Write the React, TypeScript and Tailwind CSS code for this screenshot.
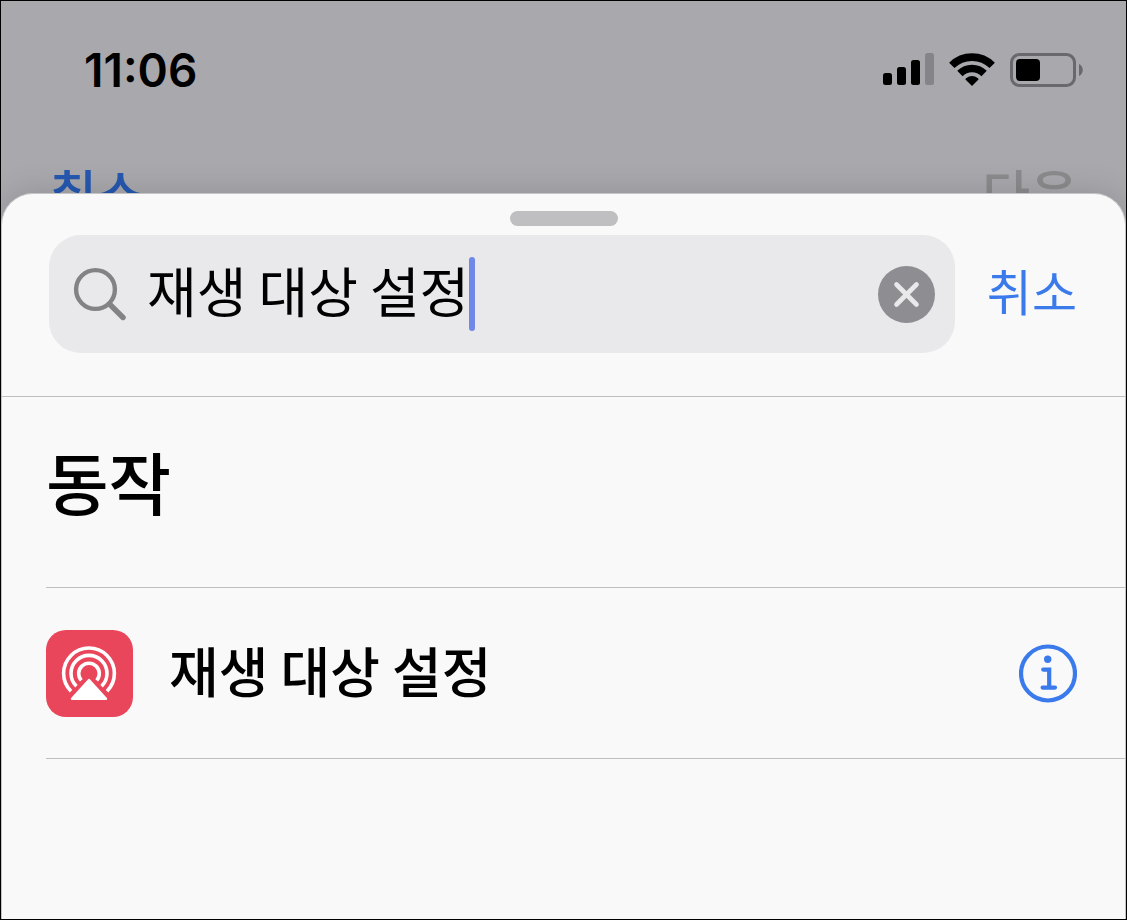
import React, { useState } from 'react';

const SignalIcon = () => (
  <svg width="51" height="34" viewBox="0 0 51 34" aria-hidden="true">
    <rect x="0" y="20" width="9" height="12" rx="2.5" />
    <rect x="14" y="14" width="9" height="18" rx="2.5" />
    <rect x="28" y="7" width="9" height="25" rx="2.5" />
    <rect x="42" y="0" width="9" height="32" rx="2.5" fill="#858489" />
  </svg>
);

const WifiIcon = () => (
  <svg width="46" height="34" viewBox="0 0 46 34" aria-hidden="true">
    <g fill="none" stroke="#000" strokeWidth="7.6">
      <path d="M2.8 12.4 A28.7 28.7 0 0 1 43.2 12.4" />
      <path d="M10.9 20.5 A17.3 17.3 0 0 1 35.1 20.5" />
    </g>
    <path d="M23 33 L16.7 26.7 Q16 26 17 25.2 Q23 20.8 29 25.2 Q30 26 29.3 26.7 Z" />
  </svg>
);

const BatteryIcon = () => (
  <svg width="74" height="34" viewBox="0 0 74 34" aria-hidden="true">
    <rect x="1.5" y="1.5" width="63" height="31" rx="8" fill="none" stroke="#69686c" strokeWidth="3" />
    <rect x="6" y="6" width="24" height="22" rx="4" />
    <path d="M69 11 C74 13 74 21 69 23 Z" fill="#69686c" />
  </svg>
);

const SearchIcon = () => (
  <svg width="54" height="54" viewBox="0 0 54 54" fill="none" stroke="#838387" className="shrink-0" aria-hidden="true">
    <circle cx="22.5" cy="22.5" r="19.4" strokeWidth="4.4" />
    <path d="M36.5 37 L50 50.5" strokeWidth="5.4" strokeLinecap="round" />
  </svg>
);

const ClearIcon = () => (
  <svg width="57" height="57" viewBox="0 0 57 57" aria-hidden="true">
    <circle cx="28.5" cy="28.5" r="28.5" fill="#8e8d92" />
    <path d="M18.5 18.5 L38.5 38.5 M38.5 18.5 L18.5 38.5" stroke="#e9e9eb" strokeWidth="4.6" strokeLinecap="round" />
  </svg>
);

const AirPlayIcon = () => (
  <svg width="87" height="87" viewBox="0 0 87 87" aria-hidden="true">
    <g fill="none" stroke="#fff" strokeWidth="3.6" strokeLinecap="butt">
      <path d="M25 61.3 A25.4 25.4 0 1 1 61 61.3" />
      <path d="M30.4 56.2 A18 18 0 1 1 55.6 56.2" />
      <path d="M35.3 50.4 A10.3 10.3 0 1 1 50.7 50.4" />
    </g>
    <path d="M43 50 L60 68.8 H26 Z" fill="#fff" stroke="#fff" strokeWidth="2.4" strokeLinejoin="round" />
  </svg>
);

const InfoIcon = () => (
  <svg width="58" height="60" viewBox="0 0 58 60" fill="none" stroke="#3a7aeb" aria-hidden="true">
    <circle cx="29" cy="30.5" r="27" strokeWidth="4.2" />
    <circle cx="28.7" cy="16.3" r="3.7" fill="#3a7aeb" stroke="none" />
    <path d="M24.2 26.6 H30.2 V44.4 M23.6 44.6 H36" strokeWidth="4.2" strokeLinecap="round" />
  </svg>
);

const ACTIONS = [{ id: 'playback-destination', title: '재생 대상 설정' }];

export default function App() {
  const [query, setQuery] = useState('재생 대상 설정');

  return (
    <div className="flex min-h-screen flex-col overflow-hidden border border-black bg-[#a9a8ad] font-['Noto_Sans_CJK_KR',sans-serif] text-black">
      {/* Status bar */}
      <div className="flex items-center justify-between pt-[35px] pr-[42px] pl-[83px]">
        <span className="font-['Inter',sans-serif] text-[46px] leading-[68px] font-semibold">11:06</span>
        <div className="flex items-center gap-[15px]">
          <SignalIcon />
          <WifiIcon />
          <BatteryIcon />
        </div>
      </div>

      {/* Navigation bar, mostly covered by the sheet */}
      <nav className="mt-14 flex h-[33px] items-start justify-between overflow-hidden px-12 text-[52px] leading-[64px] font-medium">
        <button type="button" className="text-[#2558b0]">취소</button>
        <button type="button" disabled className="text-[#8b8b8d]">다음</button>
      </nav>

      <main className="flex grow flex-col rounded-t-[32px] border-x border-t border-[#c4c4c6] bg-[#f9f9f9] shadow-[0_0_32px_rgba(0,0,0,0.15)]">
        <div className="mx-auto mt-[17px] h-[15px] w-[108px] rounded-full bg-[#bfbfc1]" />

        <form
          className="mt-[9px] flex items-center gap-8 border-b border-[#bfbfc1] pr-12 pb-[43px] pl-[47px]"
          onSubmit={(e) => e.preventDefault()}
        >
          <div className="flex h-[118px] min-w-0 grow items-center rounded-[32px] bg-[#e9e9eb] pr-5 pl-6">
            <SearchIcon />
            <input
              type="text"
              aria-label="검색"
              value={query}
              onChange={(e) => setQuery(e.target.value)}
              className="ml-5 field-sizing-content min-w-0 bg-transparent pb-2 text-[54px] leading-[80px] caret-transparent outline-none"
            />
            <span className="h-[74px] w-1.5 shrink-0 rounded-full bg-[#7088e8]" />
            <button type="button" aria-label="지우기" className="ml-auto shrink-0" onClick={() => setQuery('')}>
              <ClearIcon />
            </button>
          </div>
          <button type="button" className="shrink-0 pb-2 text-[49px] leading-[72px] text-[#3a7aeb]">취소</button>
        </form>

        <section className="pl-11">
          <h1 className="border-b border-[#bfbfc1] pt-[34px] pb-14 text-[68px] leading-[100px] font-medium">동작</h1>
          <ul>
            {ACTIONS.map((action) => (
              <li key={action.id} className="flex h-[171px] items-center border-b border-[#bfbfc1] pr-12">
                <span className="shrink-0 rounded-[20px] bg-[#e9465b]">
                  <AirPlayIcon />
                </span>
                <span className="ml-9 grow pb-1.5 text-[54px] leading-[80px] font-medium">{action.title}</span>
                <button type="button" aria-label="정보" className="shrink-0">
                  <InfoIcon />
                </button>
              </li>
            ))}
          </ul>
        </section>
      </main>
    </div>
  );
}
